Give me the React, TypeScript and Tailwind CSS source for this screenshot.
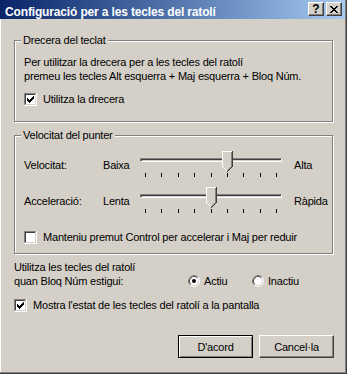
import type { ReactNode } from "react";

// peces clàssiques (estil Windows 2000)

function CheckBox({ checked }: { checked?: boolean }) {
  return (
    <svg width="13" height="13" viewBox="0 0 13 13" shapeRendering="crispEdges" className="shrink-0">
      <rect x="0" y="0" width="13" height="13" fill="#fff" />
      <path d="M0 0h12v1H1v11H0z" fill="#808080" />
      <path d="M1 1h10v1H2v9H1z" fill="#404040" />
      <path d="M11 1h1v11H1v-1h10z" fill="#d4d0c8" />
      <path d="M12 0h1v13H0v-1h12z" fill="#fff" />
      {checked && (
        <path
          d="M9 3h1v1H9z M8 4h2v1H8z M3 5h1v1H3z M7 5h3v1H7z M3 6h2v1H3z M6 6h3v1H6z M3 7h5v1H3z M4 8h3v1H4z M5 9h1v1H5z"
          fill="#000"
        />
      )}
    </svg>
  );
}

function Radio({ checked }: { checked?: boolean }) {
  return (
    <svg width="12" height="12" viewBox="0 0 12 12" className="shrink-0">
      <circle cx="6" cy="6" r="5" fill="#fff" />
      <path d="M2.11 9.89A5.5 5.5 0 0 1 9.89 2.11" fill="none" stroke="#808080" />
      <path d="M9.89 2.11A5.5 5.5 0 0 1 2.11 9.89" fill="none" stroke="#fff" />
      <path d="M2.82 9.18A4.5 4.5 0 0 1 9.18 2.82" fill="none" stroke="#404040" />
      <path d="M9.18 2.82A4.5 4.5 0 0 1 2.82 9.18" fill="none" stroke="#d4d0c8" />
      {checked && <circle cx="6" cy="6" r="2" fill="#000" />}
    </svg>
  );
}

function Thumb() {
  return (
    <svg width="11" height="21" viewBox="0 0 11 21" shapeRendering="crispEdges">
      <path d="M0 0H11V16L5.5 21L0 16Z" fill="#d4d0c8" />
      <path d="M0 0h10v1H1v15H0z M1 16h1v1H1z M2 17h1v1H2z M3 18h1v1H3z M4 19h1v1H4z" fill="#fff" />
      <path d="M9 1h1v15H9z M8 16h1v1H8z M7 17h1v1H7z M6 18h1v1H6z M5 19h1v1H5z" fill="#808080" />
      <path d="M10 0h1v16h-1z M9 16h1v1H9z M8 17h1v1H8z M7 18h1v1H7z M6 19h1v1H6z M5 20h1v1H5z" fill="#404040" />
    </svg>
  );
}

function Slider({ value }: { value: number }) {
  const left = Math.round(5 + value * 16.375) - 5;
  return (
    <div className="relative h-[26px] w-[142px] shrink-0">
      <div className="mt-[7px] h-[4px] w-full border border-t-[#808080] border-l-[#808080] border-r-white border-b-white shadow-[inset_1px_1px_0_#404040]" />
      <div className="mt-[11px] flex h-[4px] justify-between px-[5px]">
        {Array.from({ length: 9 }).map((_, i) => (
          <span key={i} className="h-[4px] w-px bg-black" />
        ))}
      </div>
      <div className="absolute top-0" style={{ left }}>
        <Thumb />
      </div>
    </div>
  );
}

function GroupBox({ title, className, children }: { title: string; className: string; children: ReactNode }) {
  return (
    <div
      className={`relative w-[319px] shrink-0 border border-[#808080] shadow-[1px_1px_0_#fff,inset_1px_1px_0_#fff] ${className}`}
    >
      <span className="absolute left-[6px] top-[-8px] bg-[#d4d0c8] px-[2px]">{title}</span>
      {children}
    </div>
  );
}

function CheckRow({ checked, label, className }: { checked?: boolean; label: string; className: string }) {
  return (
    <div className={`flex h-[14px] items-center gap-[6px] ${className}`}>
      <CheckBox checked={checked} />
      <span>{label}</span>
    </div>
  );
}

function CaptionButton({ children, className = "" }: { children: ReactNode; className?: string }) {
  return (
    <div
      className={`flex h-[14px] w-[16px] items-center justify-center border border-t-white border-l-white border-r-[#404040] border-b-[#404040] bg-[#d4d0c8] shadow-[inset_-1px_-1px_0_#808080] ${className}`}
    >
      {children}
    </div>
  );
}

export default function App() {
  return (
    <div className="h-[374px] w-[347px] select-none border-r border-b border-r-[#404040] border-b-[#404040] bg-[#d4d0c8] font-['Liberation_Sans',Arial,sans-serif] text-[11px] leading-[14px] tracking-[-0.2px] text-black">
      <div className="flex h-full flex-col border-r border-b border-r-[#808080] border-b-[#808080]">
        <div className="flex h-[19px] shrink-0 items-start bg-linear-to-r from-[#0a246a] to-[#a6caf0] pl-[5px] pr-[3px] pt-[2px]">
          <span className="mt-[3px] flex-1 text-[12px] font-bold leading-[14px] tracking-[-0.15px] text-white">
            Configuració per a les tecles del ratolí
          </span>
          <CaptionButton>
            <span className="text-[12px] font-bold leading-[12px] tracking-normal">?</span>
          </CaptionButton>
          <CaptionButton className="ml-[2px]">
            <svg width="8" height="7" viewBox="0 0 8 7" shapeRendering="crispEdges">
              <path
                d="M0 0h2v1H0z M6 0h2v1H6z M1 1h2v1H1z M5 1h2v1H5z M2 2h4v1H2z M3 3h2v1H3z M2 4h4v1H2z M1 5h2v1H1z M5 5h2v1H5z M0 6h2v1H0z M6 6h2v1H6z"
                fill="#000"
              />
            </svg>
          </CaptionButton>
        </div>

        <div className="flex flex-1 flex-col border-l border-l-white pl-[13px] pr-[11px]">
          <GroupBox title="Drecera del teclat" className="mt-[21px] h-[82px]">
            <div className="pl-[9px] pt-[14px]">
              <p>
                Per utilitzar la drecera per a les tecles del ratolí
                <br />
                premeu les tecles Alt esquerra + Maj esquerra + Bloq Núm.
              </p>
              <CheckRow checked label="Utilitza la drecera" className="mt-[9px]" />
            </div>
          </GroupBox>

          <GroupBox title="Velocitat del punter" className="mt-[13px] h-[119px]">
            <div className="pl-[9px] pt-[15px]">
              <div className="flex items-start">
                <span className="mt-[7px] w-[79px]">Velocitat:</span>
                <span className="mt-[7px] w-[37px]">Baixa</span>
                <Slider value={5} />
                <span className="ml-[12px] mt-[7px]">Alta</span>
              </div>
              <div className="mt-[10px] flex items-start">
                <span className="mt-[7px] w-[79px]">Acceleració:</span>
                <span className="mt-[7px] w-[37px]">Lenta</span>
                <Slider value={4} />
                <span className="ml-[12px] mt-[7px]">Ràpida</span>
              </div>
              <CheckRow label="Manteniu premut Control per accelerar i Maj per reduir" className="mt-[17px]" />
            </div>
          </GroupBox>

          <div className="mt-[6px] flex items-end">
            <p className="w-[174px]">
              Utilitza les tecles del ratolí
              <br />
              quan Bloq Núm estigui:
            </p>
            <label className="flex h-[14px] w-[64px] items-center gap-[4px]">
              <Radio checked />
              <span>Actiu</span>
            </label>
            <label className="flex h-[14px] items-center gap-[4px]">
              <Radio />
              <span>Inactiu</span>
            </label>
          </div>

          <CheckRow checked label="Mostra l'estat de les tecles del ratolí a la pantalla" className="mt-[10px]" />

          <div className="mt-[23px] flex justify-end gap-[6px]">
            <button
              type="button"
              className="h-[23px] w-[75px] border border-black bg-[#d4d0c8] shadow-[inset_1px_1px_0_#fff,inset_-1px_-1px_0_#808080]"
            >
              D'acord
            </button>
            <button
              type="button"
              className="h-[23px] w-[75px] border border-t-white border-l-white border-r-[#404040] border-b-[#404040] bg-[#d4d0c8] shadow-[inset_-1px_-1px_0_#808080]"
            >
              Cancel·la
            </button>
          </div>
        </div>
      </div>
    </div>
  );
}
